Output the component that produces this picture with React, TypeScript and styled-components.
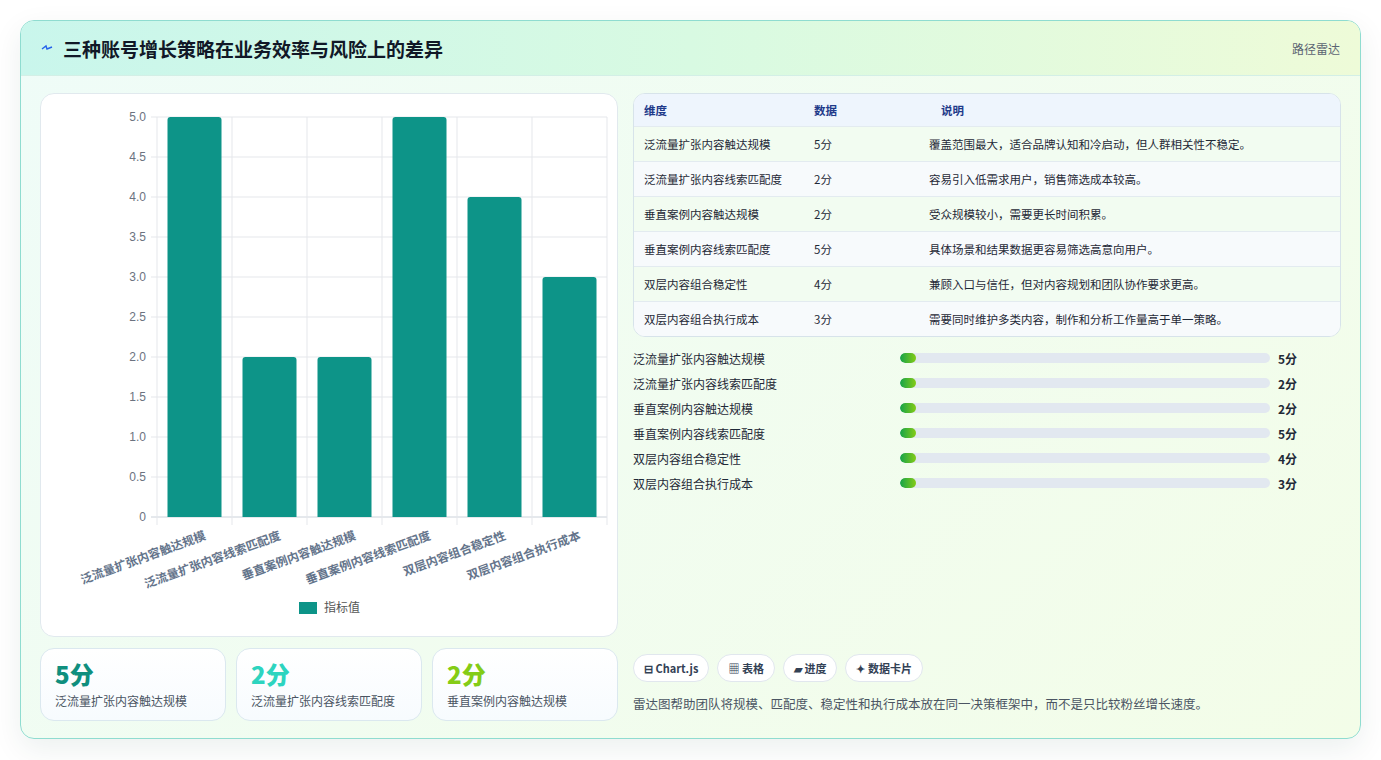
import React from 'react';
import styled, { createGlobalStyle } from 'styled-components';

const GlobalStyle = createGlobalStyle`
  html, body { margin: 0; padding: 0; background: #ffffff; }
  body { font-family: "Noto Sans CJK SC", "Noto Sans", sans-serif; }
  * { box-sizing: border-box; }
`;

const rows = [
  { name: '泛流量扩张内容触达规模', value: 5, note: '覆盖范围最大，适合品牌认知和冷启动，但人群相关性不稳定。' },
  { name: '泛流量扩张内容线索匹配度', value: 2, note: '容易引入低需求用户，销售筛选成本较高。' },
  { name: '垂直案例内容触达规模', value: 2, note: '受众规模较小，需要更长时间积累。' },
  { name: '垂直案例内容线索匹配度', value: 5, note: '具体场景和结果数据更容易筛选高意向用户。' },
  { name: '双层内容组合稳定性', value: 4, note: '兼顾入口与信任，但对内容规划和团队协作要求更高。' },
  { name: '双层内容组合执行成本', value: 3, note: '需要同时维护多类内容，制作和分析工作量高于单一策略。' },
];

const Page = styled.div`
  padding: 20px;
  width: 1381px;
  height: 760px;
`;

const Card = styled.div`
  width: 1341px;
  height: 719px;
  border: 1px solid #8fdcd0;
  border-radius: 14px;
  overflow: hidden;
  background: linear-gradient(135deg, #effcf8 0%, #f3fde8 100%);
  box-shadow: 0 10px 30px rgba(15, 60, 50, 0.08);
  display: flex;
  flex-direction: column;
`;

const Header = styled.div`
  height: 55px;
  flex: none;
  display: flex;
  align-items: center;
  justify-content: space-between;
  padding: 0 20px;
  background: linear-gradient(90deg, #c9f6ec 0%, #d8fae2 50%, #eefbd8 100%);
  border-bottom: 1px solid #d3efe6;
`;

const Title = styled.h1`
  margin: 0;
  font-size: 19px;
  font-weight: 700;
  color: #111827;
  display: flex;
  align-items: center;
  gap: 10px;
`;

const HeaderTag = styled.span`
  font-size: 12px;
  color: #5b6472;
`;

const Body = styled.div`
  flex: 1;
  display: grid;
  grid-template-columns: 578px 708px;
  gap: 15px;
  padding: 17px 19px 18px 19px;
`;

const LeftCol = styled.div`
  display: flex;
  flex-direction: column;
  gap: 11px;
`;

const ChartCard = styled.div`
  height: 544px;
  background: #ffffff;
  border: 1px solid #e1e9ee;
  border-radius: 14px;
`;

const Kpis = styled.div`
  display: grid;
  grid-template-columns: repeat(3, 1fr);
  gap: 10px;
`;

const Kpi = styled.div`
  height: 73px;
  border: 1px solid #dbe8ef;
  border-radius: 14px;
  background: linear-gradient(180deg, #ffffff, #f7fbfe);
  padding: 10px 14px;
`;

const KpiValue = styled.div<{ $color: string }>`
  font-size: 24px;
  font-weight: 800;
  line-height: 30px;
  color: ${(p) => p.$color};
`;

const KpiLabel = styled.div`
  font-size: 12px;
  color: #4b5563;
  margin-top: 3px;
`;

const RightCol = styled.div`
  display: flex;
  flex-direction: column;
`;

const Table = styled.div`
  border: 1px solid #d7e3ea;
  border-radius: 12px;
  overflow: hidden;
  background: #ffffff;
`;

const Row = styled.div<{ $head?: boolean; $alt?: boolean }>`
  display: grid;
  grid-template-columns: 170px 115px 1fr;
  align-items: center;
  height: ${(p) => (p.$head ? '32px' : '35px')};
  padding: 0 10px;
  font-size: 11.5px;
  color: ${(p) => (p.$head ? '#1e3a8a' : '#1f2937')};
  font-weight: ${(p) => (p.$head ? 600 : 400)};
  background: ${(p) => (p.$head ? '#eef5fd' : p.$alt ? '#f7fafc' : '#f2fcf1')};
  border-top: ${(p) => (p.$head ? 'none' : '1px solid #e3ebf0')};
  & > span:nth-child(3) { padding-left: ${(p) => (p.$head ? '12px' : '0')}; }
`;

const Bars = styled.div`
  display: flex;
  flex-direction: column;
  gap: 7px;
  margin-top: 12px;
`;

const BarRow = styled.div`
  display: grid;
  grid-template-columns: 267px 370px 1fr;
  align-items: center;
  height: 18px;
  font-size: 12px;
  color: #1f2937;
`;

const Track = styled.div`
  height: 10px;
  border-radius: 5px;
  background: #e2e8f0;
  overflow: hidden;
`;

const Fill = styled.div`
  width: 16px;
  height: 100%;
  border-radius: 5px;
  background: linear-gradient(90deg, #16a34a, #84cc16);
`;

const BarValue = styled.span`
  padding-left: 8px;
  font-weight: 700;
  font-size: 12px;
`;

const Footer = styled.div`
  margin-top: auto;
`;

const Chips = styled.div`
  display: flex;
  gap: 8px;
`;

const Chip = styled.span`
  height: 28px;
  padding: 0 10px;
  border: 1px solid #e1e7ee;
  border-radius: 14px;
  background: #ffffff;
  display: inline-flex;
  align-items: center;
  font-size: 11px;
  font-weight: 700;
  color: #334155;
`;

const Note = styled.p`
  margin: 12px 0 8px;
  font-size: 12.5px;
  color: #4b5563;
`;

const BarChart = () => {
  const left = 116, top = 23, h = 400, colW = 75;
  const ticks = Array.from({ length: 11 }, (_, i) => i * 0.5);
  return (
    <svg width="578" height="544" viewBox="0 0 578 544">
      {ticks.map((t) => {
        const y = top + h - (t / 5) * h;
        return (
          <g key={t}>
            <line x1={left - 6} x2={left + 450} y1={y} y2={y} stroke={t === 0 ? '#cbd2da' : '#e5e7eb'} />
            <text x={left - 11} y={y + 4} textAnchor="end" fontSize="12" fill="#6b7280" fontFamily="Liberation Sans, sans-serif">
              {t === 0 ? '0' : t.toFixed(1)}
            </text>
          </g>
        );
      })}
      {Array.from({ length: 7 }, (_, i) => (
        <line key={i} x1={left + i * colW} x2={left + i * colW} y1={top} y2={top + h + 8} stroke="#e5e7eb" />
      ))}
      {rows.map((r, i) => {
        const bh = (r.value / 5) * h;
        const cx = left + i * colW + colW / 2;
        return (
          <g key={r.name}>
            <path
              d={`M${cx - 27} ${top + h} V${top + h - bh + 3} Q${cx - 27} ${top + h - bh} ${cx - 24} ${top + h - bh} H${cx + 24} Q${cx + 27} ${top + h - bh} ${cx + 27} ${top + h - bh + 3} V${top + h} Z`}
              fill="#0d9488"
            />
            <text
              x={cx + 12}
              y={top + h + 22}
              textAnchor="end"
              fontSize="12"
              fontWeight="700"
              fill="#64748b"
              transform={`rotate(-20 ${cx + 12} ${top + h + 22})`}
            >
              {r.name}
            </text>
          </g>
        );
      })}
      <rect x="258" y="508" width="18" height="12" fill="#0d9488" />
      <text x="283" y="518" fontSize="12" fill="#555">指标值</text>
    </svg>
  );
};

export default function App() {
  const colors = ['#0f8f7e', '#2dd4bf', '#84cc16'];
  return (
    <Page>
      <GlobalStyle />
      <Card>
        <Header>
          <Title>
            <svg width="12" height="12" viewBox="0 0 12 12">
              <path d="M1 7 L5 4 L6 7 L11 5" stroke="#2563eb" strokeWidth="1.4" fill="none" />
            </svg>
            三种账号增长策略在业务效率与风险上的差异
          </Title>
          <HeaderTag>路径雷达</HeaderTag>
        </Header>
        <Body>
          <LeftCol>
            <ChartCard>
              <BarChart />
            </ChartCard>
            <Kpis>
              {rows.slice(0, 3).map((r, i) => (
                <Kpi key={r.name}>
                  <KpiValue $color={colors[i]}>{r.value}分</KpiValue>
                  <KpiLabel>{r.name}</KpiLabel>
                </Kpi>
              ))}
            </Kpis>
          </LeftCol>
          <RightCol>
            <Table>
              <Row $head>
                <span>维度</span>
                <span>数据</span>
                <span>说明</span>
              </Row>
              {rows.map((r, i) => (
                <Row key={r.name} $alt={i % 2 === 1}>
                  <span>{r.name}</span>
                  <span>{r.value}分</span>
                  <span>{r.note}</span>
                </Row>
              ))}
            </Table>
            <Bars>
              {rows.map((r) => (
                <BarRow key={r.name}>
                  <span>{r.name}</span>
                  <Track>
                    <Fill />
                  </Track>
                  <BarValue>{r.value}分</BarValue>
                </BarRow>
              ))}
            </Bars>
            <Footer>
              <Chips>
                <Chip>⊟ Chart.js</Chip>
                <Chip>▦ 表格</Chip>
                <Chip>▰ 进度</Chip>
                <Chip>✦ 数据卡片</Chip>
              </Chips>
              <Note>雷达图帮助团队将规模、匹配度、稳定性和执行成本放在同一决策框架中，而不是只比较粉丝增长速度。</Note>
            </Footer>
          </RightCol>
        </Body>
      </Card>
    </Page>
  );
}
